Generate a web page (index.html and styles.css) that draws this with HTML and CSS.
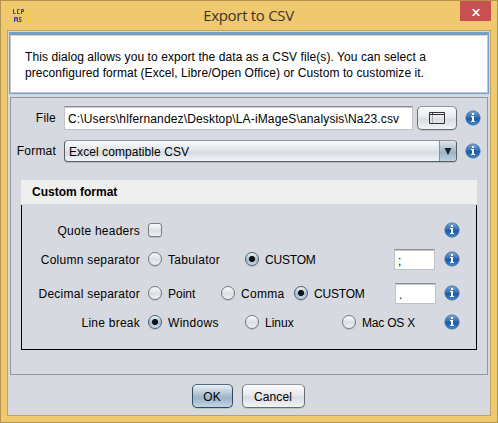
FILE: index.html
```
<!DOCTYPE html>
<html lang="en">
<head>
<meta charset="utf-8">
<title>Export to CSV</title>
<link rel="stylesheet" href="styles.css">
</head>
<body>
<svg class="defs" width="0" height="0" aria-hidden="true">
  <defs>
    <linearGradient id="blue" x1="0" y1="0" x2="0" y2="1"><stop offset="0" stop-color="#7fa9d6"/><stop offset=".45" stop-color="#346eb1"/><stop offset=".55" stop-color="#165ba9"/><stop offset="1" stop-color="#3f8bd6"/></linearGradient>
    <symbol id="info" viewBox="0 0 16 16">
      <circle cx="8" cy="8" r="7.100" fill="url(#blue)" stroke="#3b659a" stroke-width=".8"/>
      <path d="M7 3h2v2H7zM6 6h3v5h1v1H6v-1h1V7H6z" fill="#fff"/>
    </symbol>
  </defs>
</svg>
<div class="window">
  <header class="titlebar">
    <svg class="logo" width="14" height="14" viewBox="0 0 14 14" fill="none" stroke="#4038b4" stroke-width="1"><path d="M1.500 0v4.500h2M7.500.5h-2v4h2M9.500 5V.5h2v2h-2M2.500 13V8.500h3V13M4 9v3M9.500 8.500h-2v2h1.500v2H6.500"/></svg>
    <h1>Export to CSV</h1>
    <button class="close" aria-label="Close"><svg width="8" height="7" viewBox="0 0 8 7"><path d="M.7 0 7.300 7M7.300 0 .7 7" stroke="#fff" stroke-width="1.700"/></svg></button>
  </header>
  <main class="client">
    <div class="intro"><p class="l1">This dialog allows you to export the data as a CSV file(s). You can select a</p><p class="l2">preconfigured format (Excel, Libre/Open Office) or Custom to customize it.</p></div>
    <section class="panel">
      <div class="line file"><label>File</label><div class="input path"><span>C:\Users\hlfernandez\Desktop\LA-iMageS\analysis\Na23.csv</span></div><button class="btn browse" aria-label="Browse"><svg width="16" height="12" viewBox="0 0 16 12" fill="none"><path d="M3.500 3v8" stroke="#aaa"/><path d="M.5.5h15v11H.5zM.5 2.500h15M3.500 0v2" stroke="#333"/></svg></button><svg class="info"><use href="#info"/></svg></div>
      <div class="line format"><label>Format</label><div class="combo"><span>Excel compatible CSV</span><i><svg width="8" height="7" viewBox="0 0 8 7"><path d="M.5 0h7L4 7z" fill="#1d2127"/></svg></i></div><svg class="info"><use href="#info"/></svg></div>
      <h2>Custom format</h2>
      <div class="group">
        <div class="row quote"><label>Quote headers</label><i class="check"></i><svg class="info"><use href="#info"/></svg></div>
        <div class="row column"><label>Column separator</label><span class="opt"><i class="radio"></i><b class="wide">Tabulator</b></span><span class="opt"><i class="radio on"></i><b class="tight">CUSTOM</b></span><div class="input small">;</div><svg class="info"><use href="#info"/></svg></div>
        <div class="row decimal"><label>Decimal separator</label><span class="opt"><i class="radio"></i><b>Point</b></span><span class="opt"><i class="radio"></i><b class="wide">Comma</b></span><span class="opt"><i class="radio on"></i><b class="tight">CUSTOM</b></span><div class="input small">.</div><svg class="info"><use href="#info"/></svg></div>
        <div class="row break"><label>Line break</label><span class="opt"><i class="radio on"></i><b class="wide">Windows</b></span><span class="opt"><i class="radio"></i><b>Linux</b></span><span class="opt"><i class="radio"></i><b class="tight">Mac OS X</b></span><svg class="info"><use href="#info"/></svg></div>
      </div>
    </section>
    <footer><button class="btn ok">OK</button><button class="btn cancel">Cancel</button></footer>
  </main>
</div>
</body>
</html>
```
FILE: styles.css
```
* { box-sizing: border-box; }
body { margin: 0; font: 12px/14px "Liberation Sans", Arial, sans-serif; color: #000; overflow: hidden; }
.defs { position: absolute; }
h1, h2, p { margin: 0; }
button { font: inherit; padding: 0; }
i { font-style: normal; flex: none; }
b { font-weight: normal; }
.window { width: 498px; height: 423px; background: #f0c86e; border: 1px solid #b4954f; padding: 0 6px 6px; }
.titlebar { height: 29px; display: grid; grid-template-columns: 31px 1fr 31px; }
.logo { margin: 8px 0 0 5px; }
h1 { font: 15px/20px "Open Sans", "Noto Sans", sans-serif; color: #3b3427; text-align: center; padding: 4px 1px 0 0; letter-spacing: -.3px; }
.close { width: 31px; height: 20px; border: 0; background: #c75050; display: grid; place-items: center; }
.close svg { margin-top: 2px; }
.client { height: 386px; background: #d6d9df; border: 1px solid #c3a25a; padding: 1px 1px 0; }
.intro { height: 62px; background: #fff; border: 1px solid #6fa1d0; border-top-width: 2px; box-shadow: inset 0 1px #8d929b, inset 0 2px #d5d7db, inset 1px 0 #c0c6d0, inset -1px 0 #c0c6d0, inset 0 -1px #c5c9d1; padding: 15px 0 0 15px; line-height: 16px; white-space: nowrap; }
.l1 { letter-spacing: .08px; }
.l2 { letter-spacing: .07px; }
.panel { height: 278px; margin: 3px 1px 0; border: 1px solid #9297a1; padding: 8px 10px 0; }
.line { display: flex; align-items: center; height: 24px; }
.line > * { flex: none; }
.line label { width: 45px; margin-left: -10px; text-align: right; white-space: nowrap; letter-spacing: .2px; }
.input { background: #fff; border: 1px solid #c0c2c7; border-top: 1px solid #8d8e91; box-shadow: inset 0 1px #c9cacc; white-space: nowrap; }
.path { width: 349px; height: 24px; margin-left: 8px; padding: 5px 3px; letter-spacing: .15px; }
.btn { border: 1px solid #686d75; border-top-color: #92969e; border-radius: 5px; background: linear-gradient(#fbfbfc, #e9ebee 45%, #d9dce1 55%, #f2f4f7); box-shadow: 0 1px #bdc1c8; display: grid; place-items: center; }
.browse { width: 40px; height: 24px; margin-left: 4px; }
.info { width: 16px; height: 16px; flex: none; }
.line .info { margin-left: 8px; }
.format { margin-top: 9px; }
.combo { width: 393px; height: 22px; margin-left: 8px; border: 1px solid #555d67; border-top-color: #8e939b; border-radius: 4px; background: linear-gradient(#fafbfc, #e0e3e8 50%, #d7dae0 55%, #f0f3f7); box-shadow: 0 1px #b6bac2; display: flex; align-items: center; padding-left: 4px; overflow: hidden; }
.combo span { flex: 1; padding-top: 1px; letter-spacing: .07px; }
.combo i { width: 17px; height: 20px; display: grid; place-items: center; border-left: 1px solid #7b91a6; background: linear-gradient(#dde7ef, #a5b9cb 50%, #9bb1c5 55%, #bfd3e5); }
h2 { height: 24px; margin-top: 17px; background: #efefef; font: bold 12px/25px "Liberation Sans", Arial, sans-serif; padding-left: 11px; }
.group { height: 145px; margin-top: 1px; border: 1px solid #000; border-top: 0; padding-top: 14px; }
.row { display: grid; align-items: center; height: 22px; white-space: nowrap; }
.row label { text-align: right; padding: 1px 8px 0 0; letter-spacing: .24px; }
.quote { grid-template-columns: 126px 296px 16px; }
.column { grid-template-columns: 126px 97px 149px 50px 16px; margin-top: 7px; }
.decimal { grid-template-columns: 126px 73px 73px 101px 49px 16px; margin-top: 12px; }
.break { grid-template-columns: 126px 97px 97px 102px 16px; margin-top: 7px; }
.opt { display: flex; align-items: center; gap: 6px; }
.opt b { padding-top: 1px; }
.wide { letter-spacing: .3px; }
.tight { letter-spacing: -.2px; }
.radio { width: 14px; height: 14px; border: 1px solid #73777f; border-radius: 50%; background: linear-gradient(#fbfbfc, #dcdee3 55%, #f1f2f5); box-shadow: 0 1px #bcc0c7; }
.radio.on { border-color: #4b5c6e; background: radial-gradient(circle, #0c1116 0 2.700px, transparent 3.400px), linear-gradient(#eef4f9, #a5bacd 55%, #c5d9eb); }
.check { width: 14px; height: 14px; border: 1px solid #777b83; border-radius: 3px; background: linear-gradient(#fbfbfc, #dcdee3 55%, #f1f2f5); box-shadow: 0 1px #bcc0c7; }
.small { width: 41px; height: 21px; padding: 4px 3px; }
footer { display: flex; justify-content: center; gap: 9px; padding: 9px 2px 0 0; }
.ok { width: 41px; height: 24px; padding-top: 1px; border-color: #31485e; border-top-color: #536a80; background: linear-gradient(#eaf0f5, #a8bccd 50%, #9db3c7 58%, #c0d5e8); }
.cancel { width: 63px; height: 24px; padding-top: 1px; letter-spacing: .1px; }
```
